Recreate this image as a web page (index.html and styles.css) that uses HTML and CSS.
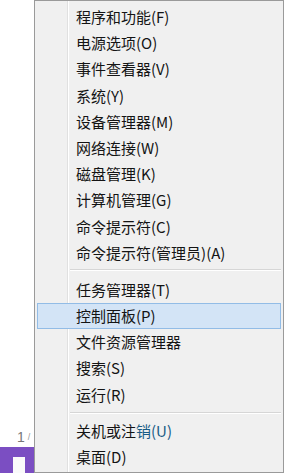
FILE: index.html
```html
<!DOCTYPE html>
<html lang="zh-CN">
<head>
    <meta charset="UTF-8">
    <meta name="viewport" content="width=device-width, initial-scale=1.0">
    <title>Win+X 菜单</title>
    <link rel="stylesheet" href="styles.css">
</head>
<body>
    <div class="desk">
        <div class="side">
            <span class="clock">1<i>/</i></span>
            <div class="tile"><div class="tile-box"></div></div>
        </div>

        <ul class="menu">
            <li class="item">程序和功能(F)</li>
            <li class="item">电源选项(O)</li>
            <li class="item">事件查看器(V)</li>
            <li class="item">系统(Y)</li>
            <li class="item">设备管理器(M)</li>
            <li class="item">网络连接(W)</li>
            <li class="item">磁盘管理(K)</li>
            <li class="item">计算机管理(G)</li>
            <li class="item">命令提示符(C)</li>
            <li class="item">命令提示符(管理员)(A)</li>
            <li class="sep"></li>
            <li class="item">任务管理器(T)</li>
            <li class="item active">控制面板(P)</li>
            <li class="item">文件资源管理器</li>
            <li class="item">搜索(S)</li>
            <li class="item">运行(R)</li>
            <li class="sep sep-small"></li>
            <li class="item">关机或注<span class="hot">销(U)</span></li>
            <li class="item">桌面(D)</li>
        </ul>
    </div>
</body>
</html>
```

FILE: styles.css
```css
body {
    margin: 0;
    padding: 0;
    background-color: #fff;
    font-family: "Noto Sans CJK SC", "Noto Sans", sans-serif;
    overflow: hidden;
}
.desk {
    display: flex;
    height: 473px;
    overflow: hidden;
}
.side {
    width: 34px;
    flex-shrink: 0;
    display: flex;
    flex-direction: column;
    justify-content: flex-end;
}
.clock {
    font-family: "Liberation Sans", sans-serif;
    font-size: 14px;
    color: #777;
    padding-left: 17px;
    line-height: 14px;
    margin-bottom: 3px;
}
.clock i {
    font-style: normal;
    font-size: 9px;
    vertical-align: top;
    margin-left: 3px;
    color: #999;
}
.tile {
    height: 26px;
    background-color: #7b4ec2;
    display: flex;
    align-items: flex-end;
    padding-left: 13px;
}
.tile-box {
    width: 12px;
    height: 16px;
    background-color: #fafafa;
}
.menu {
    list-style-type: none;
    margin: 0;
    padding: 3px 0 2px 0;
    width: 248px;
    height: 466px;
    flex-shrink: 0;
    border: 1px solid #9a9a9a;
    box-shadow: 0 2px 0 #4c4c4c;
    background:
        linear-gradient(to right, transparent 32px, #e0e0e0 32px, #e0e0e0 33px, #fff 33px, #fff 34px, transparent 34px),
        #f0f0f0;
}
.item {
    height: 26.2px;
    line-height: 26.2px;
    padding-left: 39px;
    margin: 0 2px;
    font-size: 15px;
    color: #141414;
    white-space: nowrap;
    box-sizing: border-box;
}
.item.active {
    background-color: #d3e4f6;
    border: 1px solid #92bce6;
    line-height: 24.2px;
    padding-left: 38px;
}
.hot {
    color: #195c86;
}
.sep {
    height: 11px;
    margin-left: 35px;
    margin-right: 2px;
    background: linear-gradient(to bottom, transparent 3px, #d6d6d6 3px, #d6d6d6 4px, #fff 4px, #fff 5px, transparent 5px);
}
.sep-small {
    height: 10px;
    background: linear-gradient(to bottom, transparent 4px, #d6d6d6 4px, #d6d6d6 5px, #fff 5px, #fff 6px, transparent 6px);
}
```
